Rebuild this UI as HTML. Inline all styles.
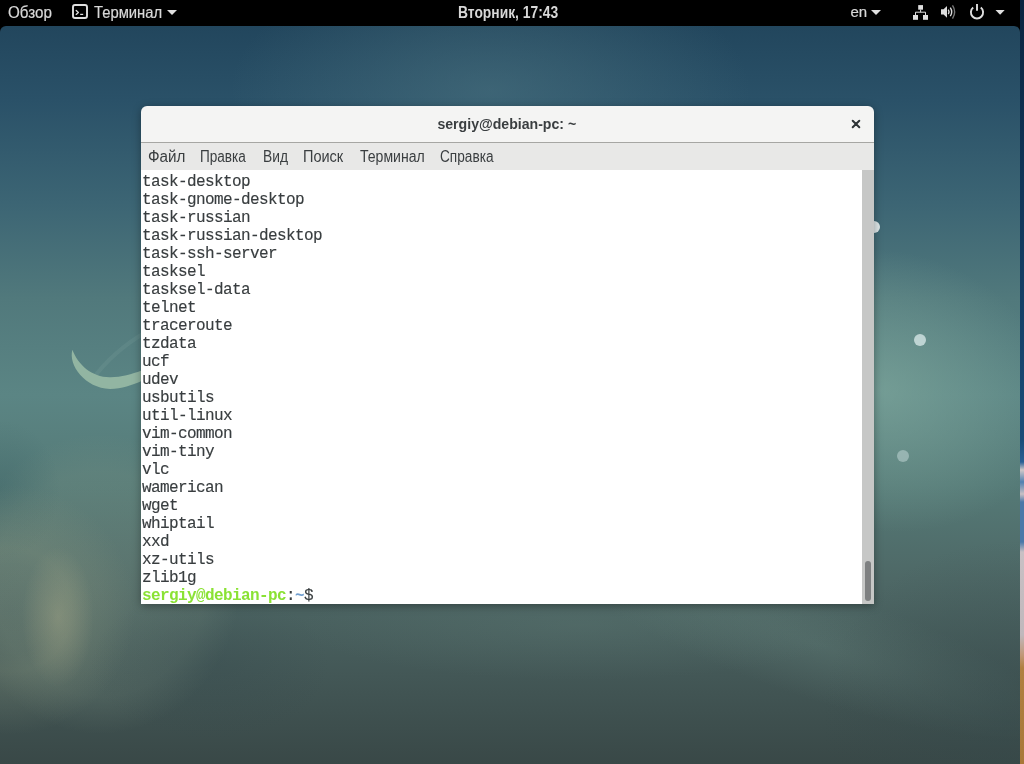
<!DOCTYPE html>
<html><head><meta charset="utf-8">
<style>
*{margin:0;padding:0;box-sizing:border-box}
html,body{width:1024px;height:764px;overflow:hidden;background:#000}
body{position:relative;font-family:"Liberation Sans",sans-serif}
#top,#win{will-change:transform}
#strip{position:absolute;left:1020px;top:0;width:4px;height:764px;
 background:linear-gradient(to bottom,#0a2440 0px,#1a4c78 440px,#2a5f94 462px,#d0c8c8 470px,#5080b0 482px,#c8c0c4 494px,#4a78a8 502px,#4a78a8 542px,#c8c0c4 552px,#c0b8bc 635px,#c09878 655px,#b08040 668px,#a87838 764px)}
#desk{position:absolute;left:0;top:26px;width:1020px;height:738px;border-radius:6px 6px 0 0;overflow:hidden;background:linear-gradient(to bottom,#22465d 0px,#2a5168 74px,#3c6574 177px,#51797c 273px,#5b8584 369px,#557a77 458px,#4e6866 553px,#435756 650px,#394847 738px)}
#desk svg{position:absolute;left:0;top:0}
.gl{position:absolute}
#top{position:absolute;left:0;top:0;width:1020px;height:26px;background:#000;color:#d8d8d8;-webkit-text-stroke:0.2px;font-size:16px;line-height:18px}
#top span{position:absolute;white-space:nowrap;margin-top:0.6px}
#win{position:absolute;left:141px;top:106px;width:733px;height:498px;border-radius:6px 6px 0 0;overflow:hidden;
 box-shadow:0 2px 8px rgba(0,0,0,0.35)}
#title{position:absolute;left:0;top:0;width:733px;height:37px;background:#f4f4f3;border-bottom:1px solid #a6a6a3;
 font-weight:bold;font-size:15px;color:#3a3e40;text-align:center;line-height:36px}
#title div{display:inline-block;transform:scaleX(0.94);position:relative;left:-1px}
#menu{position:absolute;left:0;top:37px;width:733px;height:27px;background:#e8e8e7;font-size:16px;line-height:18px;color:#3a3e40}
#menu span{position:absolute;top:5px;white-space:nowrap}
#term{position:absolute;left:0;top:64px;width:721px;height:434px;background:#fff;
 font-family:"Liberation Mono",monospace;font-size:16px;letter-spacing:-0.6px;line-height:18px;color:#383d3f;-webkit-text-stroke:0.15px;padding:3px 0 0 1px;white-space:pre}
#sb{position:absolute;left:721px;top:64px;width:12px;height:434px;background:#c6c7c6}
#thumb{position:absolute;left:3px;top:391px;width:6px;height:40px;border-radius:3px;background:#7e8081}
.g{color:#8ae234;font-weight:bold;-webkit-text-stroke:0}.b{color:#729fcf;font-weight:bold;-webkit-text-stroke:0}
.dot{position:absolute;width:12px;height:12px;border-radius:50%;background:rgba(220,235,235,0.75)}
</style></head><body>
<div id="strip"></div>
<div id="desk">
<div style="position:absolute;left:0;top:-26px;width:1020px;height:764px">
<div class="gl" style="left:230px;top:-40px;width:520px;height:260px;background:radial-gradient(closest-side,rgba(85,125,135,0.45),rgba(85,125,135,0) 100%)"></div>
<div class="gl" style="left:700px;top:250px;width:360px;height:280px;transform:rotate(12deg);background:radial-gradient(closest-side,rgba(132,172,160,0.6),rgba(132,172,160,0.25) 60%,rgba(132,172,160,0) 100%)"></div>
<div class="gl" style="left:560px;top:590px;width:520px;height:110px;transform:rotate(18deg);background:radial-gradient(closest-side,rgba(105,135,128,0.3),rgba(105,135,128,0) 100%)"></div>
<div class="gl" style="left:820px;top:540px;width:380px;height:360px;background:radial-gradient(closest-side,rgba(52,72,74,0.4),rgba(52,72,74,0) 100%)"></div>
<div class="gl" style="left:-40px;top:434px;width:280px;height:300px;background:radial-gradient(closest-side,rgba(140,160,140,0.22),rgba(140,160,140,0.16) 75%,rgba(140,160,140,0) 100%)"></div>
<div class="gl" style="left:-60px;top:420px;width:120px;height:140px;background:radial-gradient(closest-side,rgba(60,100,104,0.4),rgba(60,100,104,0) 100%)"></div>
<div class="gl" style="left:0;top:440px;width:240px;height:324px;background:radial-gradient(circle at 10px 170px,rgba(150,160,130,0.14) 0px,rgba(150,160,130,0.18) 45px,rgba(150,160,130,0.24) 62px,rgba(150,160,130,0.12) 95px,rgba(150,160,130,0) 125px)"></div>
<div class="gl" style="left:22px;top:547px;width:72px;height:140px;background:radial-gradient(closest-side,rgba(175,175,140,0.4),rgba(175,175,140,0) 100%)"></div>
<div class="gl" style="left:90px;top:590px;width:240px;height:150px;background:radial-gradient(closest-side,rgba(52,72,76,0.3),rgba(52,72,76,0) 100%)"></div>
<div class="gl" style="left:300px;top:570px;width:560px;height:110px;background:radial-gradient(closest-side,rgba(105,135,128,0.22),rgba(105,135,128,0) 100%)"></div>
</div>
<svg width="1020" height="738" viewBox="0 26 1020 738">
 <path d="M92 380 C105 362 122 346 146 332" fill="none" stroke="#9cc0b8" stroke-width="4" opacity="0.12"/>
 <path d="M72.4 349.7 C68 365 85 388 110 389 C122 389 132 385 141 381.3 L141 370.7 C132 374 120 377.5 109.5 377.2 C92 377 78 365 72.4 349.7 Z" fill="#92b5a2"/>
</svg>
</div>
<div class="dot" style="left:914px;top:334px"></div>
<div class="dot" style="left:897px;top:450px;background:rgba(200,220,220,0.5)"></div>
<div class="dot" style="left:868px;top:221px;background:rgba(236,242,242,0.92)"></div>
<div id="top">
 <span style="left:8.35px;top:3px;transform:scaleX(0.949);transform-origin:0 0">Обзор</span>
 <svg style="position:absolute;left:0;top:0" width="1020" height="26" viewBox="0 0 1020 26">
  <g fill="none" stroke="#e0e0e0">
   <rect x="73" y="5" width="14" height="13" rx="2" stroke-width="1.9"/>
   <path d="M76.2 10.4 L78.4 12.4 L76.2 14.4" stroke-width="1.3" stroke-linecap="round" stroke-linejoin="round"/>
   <path d="M80.2 14.4 H83.2" stroke-width="1.2"/>
  </g>
  <g fill="#e0e0e0">
   <path d="M167 10 H177 L172 15 Z"/>
   <path d="M871 10 H881 L876 15 Z"/>
   <path d="M995.5 10 H1004.7 L1000.1 14.7 Z"/>
   <rect x="918.2" y="5.1" width="4.8" height="4.6"/>
   <rect x="913" y="15" width="5" height="4.8"/>
   <rect x="923" y="15" width="5" height="4.8"/>
  </g>
  <g fill="none" stroke="#e0e0e0" stroke-width="1">
   <path d="M920.6 9.6 V12.2 M915.5 15 V12.2 H925.5 V15"/>
  </g>
  <path d="M941 9.2 H943.6 L947 6 V17.8 L943.6 14.6 H941 Z" fill="#dcdcdc"/>
  <path d="M948.3 9.6 Q949.8 11.9 948.3 14.2" fill="none" stroke="#dcdcdc" stroke-width="1.4"/>
  <path d="M950.3 7.6 Q953.1 11.9 950.3 16.2" fill="none" stroke="#dcdcdc" stroke-width="1.4"/>
  <path d="M952.5 5.4 Q956.8 11.9 952.5 18.6" fill="none" stroke="#777" stroke-width="1.4"/>
  <g fill="none" stroke="#e0e0e0" stroke-width="1.9" stroke-linecap="butt">
   <path d="M973.2 7.6 A6.1 6.1 0 1 0 980.8 7.6"/>
   <path d="M977 4 V10.8"/>
  </g>
 </svg>
 <span style="left:94px;top:3px;transform:scaleX(0.925);transform-origin:0 0">Терминал</span>
 <span style="left:457.6px;top:3px;font-weight:bold;-webkit-text-stroke:0;transform:scaleX(0.865);transform-origin:0 0">Вторник, 17:43</span>
 <span style="left:850.4px;top:2.4px;font-size:15px;transform:scaleX(1.0);transform-origin:0 0">en</span>
</div>
<div id="win">
 <div id="title"><div>sergiy@debian-pc: ~</div><svg style="position:absolute;left:704px;top:9px" width="20" height="20" viewBox="0 0 20 20"><path d="M7.7 5.7 L14.3 12.3 M14.3 5.7 L7.7 12.3" stroke="#2e3436" stroke-width="2" stroke-linecap="round"/></svg></div>
 <div id="menu">
  <span style="left:7.1px;transform:scaleX(0.951);transform-origin:0 0">Файл</span>
  <span style="left:59.25px;transform:scaleX(0.849);transform-origin:0 0">Правка</span>
  <span style="left:121.9px;transform:scaleX(0.861);transform-origin:0 0">Вид</span>
  <span style="left:162.3px;transform:scaleX(0.907);transform-origin:0 0">Поиск</span>
  <span style="left:218.8px;transform:scaleX(0.879);transform-origin:0 0">Терминал</span>
  <span style="left:298.75px;transform:scaleX(0.852);transform-origin:0 0">Справка</span>
 </div>
 <div id="term">task-desktop
task-gnome-desktop
task-russian
task-russian-desktop
task-ssh-server
tasksel
tasksel-data
telnet
traceroute
tzdata
ucf
udev
usbutils
util-linux
vim-common
vim-tiny
vlc
wamerican
wget
whiptail
xxd
xz-utils
zlib1g
<span class="g">sergiy@debian-pc</span>:<span class="b">~</span>$ </div>
 <div id="sb"><div id="thumb"></div></div>
</div>
</body></html>
